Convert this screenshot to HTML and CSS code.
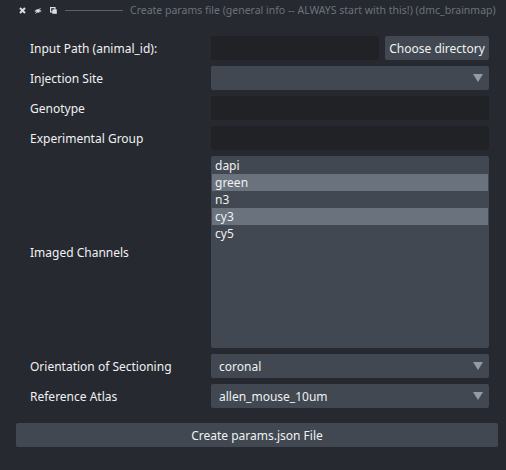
FILE: index.html
```html
<!DOCTYPE html>
<html>
<head>
<meta charset="utf-8">
<link rel="stylesheet" href="styles.css">
</head>
<body>
<div class="titlebar">
  <svg class="ico close" width="7" height="7" viewBox="0 0 7 7"><path d="M1 1L6 6M6 1L1 6" stroke="#dcdee0" stroke-width="1.9"/></svg>
  <svg class="ico eye" width="8" height="7" viewBox="0 0 8 7"><path d="M0.5 4C1.8 1.5 6.2 1.5 7.5 4C6.2 6.2 1.8 6.2 0.5 4Z" fill="#a3a8ad"/><circle cx="4" cy="3.8" r="1.4" fill="#eceef0"/><path d="M1.5 6.5L6.5 1" stroke="#d6d8db" stroke-width="0.9"/></svg>
  <svg class="ico copy" width="7" height="7" viewBox="0 0 7 7"><rect x="0.6" y="0.6" width="4.4" height="4.4" fill="none" stroke="#dcdee0" stroke-width="1.2"/><rect x="2.4" y="2.4" width="4.4" height="4.4" fill="#dcdee0"/></svg>
  <span class="rule"></span>
  <span class="title">Create params file (general info -- ALWAYS start with this!) (dmc_brainmap)</span>
</div>
<div class="form">
  <label class="lbl">Input Path (animal_id):</label>
  <div class="pathrow">
    <div class="field"></div>
    <div class="btn">Choose directory</div>
  </div>
  <label class="lbl">Injection Site</label>
  <div class="combo"><span></span><i class="arrow"></i></div>
  <label class="lbl">Genotype</label>
  <div class="field"></div>
  <label class="lbl">Experimental Group</label>
  <div class="field"></div>
  <label class="lbl">Imaged Channels</label>
  <div class="list">
    <div class="item">dapi</div>
    <div class="item sel">green</div>
    <div class="item">n3</div>
    <div class="item sel">cy3</div>
    <div class="item">cy5</div>
  </div>
  <label class="lbl">Orientation of Sectioning</label>
  <div class="combo"><span>coronal</span><i class="arrow"></i></div>
  <label class="lbl">Reference Atlas</label>
  <div class="combo"><span>allen_mouse_10um</span><i class="arrow"></i></div>
</div>
<div class="create">Create params.json File</div>
</body>
</html>
```
FILE: styles.css
```css
* { box-sizing: border-box; }
html, body { margin: 0; padding: 0; }
body {
  width: 506px;
  height: 470px;
  background: #262930;
  color: #f0f1f2;
  font-family: "Noto Sans", "DejaVu Sans", sans-serif;
  font-size: 12px;
  overflow: hidden;
}
.titlebar {
  height: 20px;
  display: flex;
  align-items: center;
  padding-left: 19px;
}
.ico { display: block; }
.close { margin-right: 8px; }
.eye { margin-right: 8px; }
.copy { margin-right: 8px; }
.rule {
  width: 58px;
  height: 1px;
  background: #5a626c;
  margin-right: 7px;
}
.title {
  color: #6a737d;
  font-size: 10.5px;
  white-space: nowrap;
}
.form {
  display: grid;
  grid-template-columns: 181px 278px;
  row-gap: 6px;
  padding: 16px 0 0 30px;
}
.lbl {
  display: flex;
  align-items: center;
  height: 100%;
  min-height: 24px;
}
.field {
  height: 24px;
  background: #202226;
  border-radius: 2px;
}
.pathrow {
  display: flex;
  gap: 6px;
}
.pathrow .field { flex: 1; }
.btn {
  width: 104px;
  height: 24px;
  background: #414851;
  border-radius: 2px;
  display: flex;
  align-items: center;
  justify-content: center;
}
.combo {
  height: 24px;
  background: #414851;
  border-radius: 2px;
  display: flex;
  align-items: center;
  justify-content: space-between;
  padding: 0 6px 0 8px;
}
.arrow {
  width: 0;
  height: 0;
  border-left: 5.5px solid transparent;
  border-right: 5.5px solid transparent;
  border-top: 8px solid #959ba2;
}
.list {
  height: 192px;
  background: #414851;
  border-radius: 2px;
  padding: 1px;
}
.item {
  height: 17px;
  line-height: 17px;
  padding-left: 3px;
}
.item.sel { background: #6a737d; }
.create {
  margin: 15px 8px 0 16px;
  height: 24px;
  background: #414851;
  border-radius: 2px;
  display: flex;
  align-items: center;
  justify-content: center;
}
```
